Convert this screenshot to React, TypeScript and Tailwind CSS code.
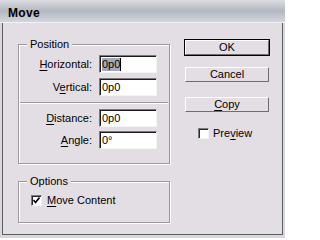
import React from "react";

const font = { fontFamily: '"Liberation Sans", Arial, sans-serif' };

function Field({ label, u, value, selected }: { label: string; u: number; value: string; selected?: boolean }) {
  return (
    <div className="flex items-center">
      <span className="w-[73px] text-right">
        {label.slice(0, u)}
        <span className="underline underline-offset-[2px]">{label.charAt(u)}</span>
        {label.slice(u + 1)}
      </span>
      <div className="ml-[7px] flex h-[18px] w-[58px] items-center border border-[#7a7a7a] border-b-[#f4f4f4] border-r-[#f4f4f4] bg-white pl-[2px] shadow-[inset_1px_1px_0_#1a1a1a]">
        {selected ? (
          <>
            <span className="bg-[#a3a9bb] leading-[13px]">{value}</span>
            <span className="h-[13px] w-px bg-black" />
          </>
        ) : (
          <span className="leading-[13px]">{value}</span>
        )}
      </div>
    </div>
  );
}

function Btn({ children, isDefault }: { children: React.ReactNode; isDefault?: boolean }) {
  return (
    <div className={isDefault ? "border border-black" : "border border-transparent"}>
      <div className="flex h-[15px] items-center justify-center border border-white border-b-[#6e6e6e] border-r-[#6e6e6e] bg-[#e3dee3] leading-none">
        {children}
      </div>
    </div>
  );
}

function Check({ checked }: { checked?: boolean }) {
  return (
    <span className="flex h-[11px] w-[11px] items-center justify-center border border-[#7a7a7a] border-b-[#f4f4f4] border-r-[#f4f4f4] bg-white shadow-[inset_1px_1px_0_#2a2a2a]">
      {checked && (
        <svg width="7" height="7" viewBox="0 0 7 7">
          <path d="M0.5 3 L2.5 5.5 L6.5 0.5" stroke="#000" strokeWidth="1.6" fill="none" />
        </svg>
      )}
    </span>
  );
}

export default function App() {
  return (
    <div className="flex h-[238px] w-[285px] flex-col bg-[#d9d7dc] text-[11px] text-black" style={font}>
      <div className="flex h-[23px] items-end border-b border-[#f2f2f4] bg-gradient-to-b from-[#dcdde2] via-[#b3b7c0] to-[#d3d6dd] pb-[3px] pl-[8px]">
        <span className="text-[12px] font-bold leading-none tracking-[0.3px]">Move</span>
      </div>
      <div className="mx-[2px] mb-[3px] flex flex-1 gap-[14px] border-x border-b border-[#5e5e62] bg-[#e3dee3] pl-[15px] pt-[15px]">
        <div className="flex w-[152px] flex-col gap-[11px]">
          <fieldset className="border border-[#9c989c] px-0 pb-[14px] pt-[4px] shadow-[inset_1px_1px_0_#ffffff,1px_1px_0_#ffffff]">
            <legend className="ml-[8px] bg-[#e3dee3] px-[3px] leading-[13px]">Position</legend>
            <div className="flex flex-col gap-[5px]">
              <Field label="Horizontal:" u={0} value="0p0" selected />
              <Field label="Vertical:" u={1} value="0p0" />
            </div>
            <div className="mx-px mb-[5px] mt-[6px] h-[2px] border-t border-[#9c989c] border-b border-b-white" />
            <div className="flex flex-col gap-[4px]">
              <Field label="Distance:" u={0} value="0p0" />
              <Field label="Angle:" u={0} value="0°" />
            </div>
          </fieldset>
          <fieldset className="border border-[#9c989c] px-0 pb-[16px] pt-[7px] shadow-[inset_1px_1px_0_#ffffff,1px_1px_0_#ffffff]">
            <legend className="ml-[8px] bg-[#e3dee3] px-[3px] leading-[13px]">Options</legend>
            <div className="flex items-center gap-[5px] pl-[12px]">
              <Check checked />
              <span className="leading-[11px]">
                <span className="underline underline-offset-[2px]">M</span>ove Content
              </span>
            </div>
          </fieldset>
        </div>
        <div className="mt-[1px] flex w-[86px] flex-col">
          <Btn isDefault>OK</Btn>
          <div className="mt-[10px]">
            <Btn>Cancel</Btn>
          </div>
          <div className="mt-[13px]">
            <Btn>
              <span>
                <span className="underline underline-offset-[2px]">C</span>opy
              </span>
            </Btn>
          </div>
          <div className="ml-[14px] mt-[15px] flex items-center gap-[4px]">
            <Check />
            <span className="leading-[11px]">
              Pre<span className="underline underline-offset-[2px]">v</span>iew
            </span>
          </div>
        </div>
      </div>
    </div>
  );
}
